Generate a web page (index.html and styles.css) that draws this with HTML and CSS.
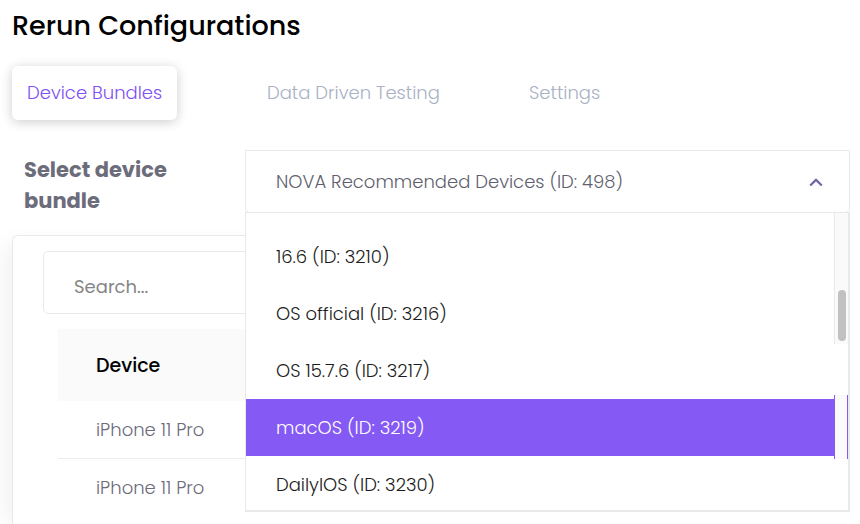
FILE: index.html
```html
<!DOCTYPE html>
<html lang="en">
<head>
<meta charset="utf-8">
<meta name="viewport" content="width=device-width, initial-scale=1">
<title>Rerun Configurations</title>
<link rel="stylesheet" href="styles.css">
</head>
<body>
<main class="page">
  <h1 class="title">Rerun Configurations</h1>
  <nav class="tabs">
    <button type="button" class="tab tab-active">Device Bundles</button>
    <button type="button" class="tab">Data Driven Testing</button>
    <button type="button" class="tab">Settings</button>
  </nav>
  <div class="field">
    <label class="field-label" for="bundle">Select device bundle</label>
    <div class="dropdown">
      <select id="bundle" class="dropdown-control">
        <option>NOVA Recommended Devices (ID: 498)</option>
      </select>
      <svg class="chevron" viewBox="0 0 14 9" aria-hidden="true"><path d="M1.200 7.500 7 1.900l5.800 5.600"/></svg>
      <div class="menu">
        <ul class="options" role="listbox">
          <li class="option" role="option">16.6 (ID: 3210)</li>
          <li class="option" role="option">OS official (ID: 3216)</li>
          <li class="option" role="option">OS 15.7.6 (ID: 3217)</li>
          <li class="option option-active" role="option" aria-selected="true">macOS (ID: 3219)</li>
          <li class="option" role="option">DailyIOS (ID: 3230)</li>
        </ul>
        <div class="track"><div class="thumb"></div></div>
        <div class="track-active"></div>
      </div>
    </div>
  </div>
  <section class="card">
    <input class="search" type="search" placeholder="Search..." aria-label="Search">
    <table class="devices">
      <thead><tr><th>Device</th></tr></thead>
      <tbody>
        <tr><td>iPhone 11 Pro</td></tr>
        <tr><td>iPhone 11 Pro</td></tr>
      </tbody>
    </table>
  </section>
</main>
</body>
</html>
```
FILE: styles.css
```css
* { box-sizing: border-box; }

body {
  margin: 0;
  background: #fff;
  color: #6c6c7b;
  font: 300 18px/27px Poppins, Inter, "Open Sans", sans-serif;
  overflow: hidden;
}

button, select, input { font: inherit; }

.page { padding: 6px 10px 0 12px; }

.title {
  margin: 0;
  color: #000;
  font-size: 27px;
  font-weight: 500;
  line-height: 40px;
}

.tabs {
  display: grid;
  grid-template-columns: 240px 262px auto;
  justify-items: start;
  margin-top: 20px;
}

.tab {
  height: 54px;
  padding: 0 15px 2px;
  border: 0;
  border-radius: 6px;
  background: none;
  color: #a9b1c5;
}

.tab-active {
  background: #fff;
  color: #8050f4;
  box-shadow: 0 2px 12px rgba(0, 0, 0, .2);
}

.field {
  display: grid;
  grid-template-columns: 233px 1fr;
  margin-top: 30px;
}

.field-label {
  padding: 4px 48px 0 12px;
  font-size: 21px;
  font-weight: 700;
  line-height: 31px;
}

.dropdown { position: relative; }

.dropdown-control {
  display: block;
  width: 100%;
  height: 63px;
  padding: 0 30px;
  border: 1px solid #e9e9e9;
  border-radius: 0 0 5px 5px;
  background: #fff;
  color: #5f5f6e;
  appearance: none;
}

.chevron {
  position: absolute;
  top: 28px;
  right: 27px;
  width: 14px;
  height: 9px;
  fill: none;
  stroke: #6e65a6;
  stroke-width: 2.200;
}

.menu {
  position: absolute;
  top: 62px;
  left: 0;
  right: 0;
  height: 300px;
  border: 1px solid #e9e9e9;
  border-width: 1px 2px 2px 1px;
  background: #fff;
  overflow: hidden;
}

.options {
  margin: 0;
  padding: 15px 13px 0 0;
  list-style: none;
}

.option {
  padding: 15px 30px;
  color: #1c1c20;
}

.option-active { background: #8559f4; color: #fff; }

.track {
  position: absolute;
  top: 0;
  right: 0;
  width: 14px;
  height: 131px;
  border-left: 1px solid #e9e9e9;
  background: #fafafa;
}

.thumb {
  width: 8px;
  height: 51px;
  margin: 77px 0 0 3px;
  border-radius: 4px;
  background: #c1c1c1;
}

.track-active {
  position: absolute;
  top: 182px;
  right: 0;
  width: 14px;
  height: 64px;
  border: solid #8559f4;
  border-width: 0 1px;
  background: #fafafa;
}

.card {
  margin-top: 19px;
  padding: 15px 30px;
  border: 1px solid #e9e9e9;
  border-right: 0;
  border-radius: 6px;
  box-shadow: -16px 0 20px -8px rgba(0, 0, 0, .05);
}

.search {
  display: block;
  width: 100%;
  height: 63px;
  padding: 8px 30px 0;
  border: 1px solid #e9e9e9;
  border-radius: 5px;
  background: #fff;
  appearance: none;
}

.search::placeholder { color: #858585; opacity: 1; font-weight: 400; }

.devices {
  width: calc(100% - 30px);
  margin: 15px 15px 0;
  border-spacing: 0;
  text-align: left;
}

.devices th {
  height: 72px;
  padding: 0 38px;
  background: #fafafa;
  color: #000;
  font-size: 19px;
  font-weight: 500;
}

.devices td {
  height: 58px;
  padding: 0 38px;
  border-bottom: 1px solid #ececec;
}

.devices tr:last-child td { border-bottom-color: transparent; }
```
